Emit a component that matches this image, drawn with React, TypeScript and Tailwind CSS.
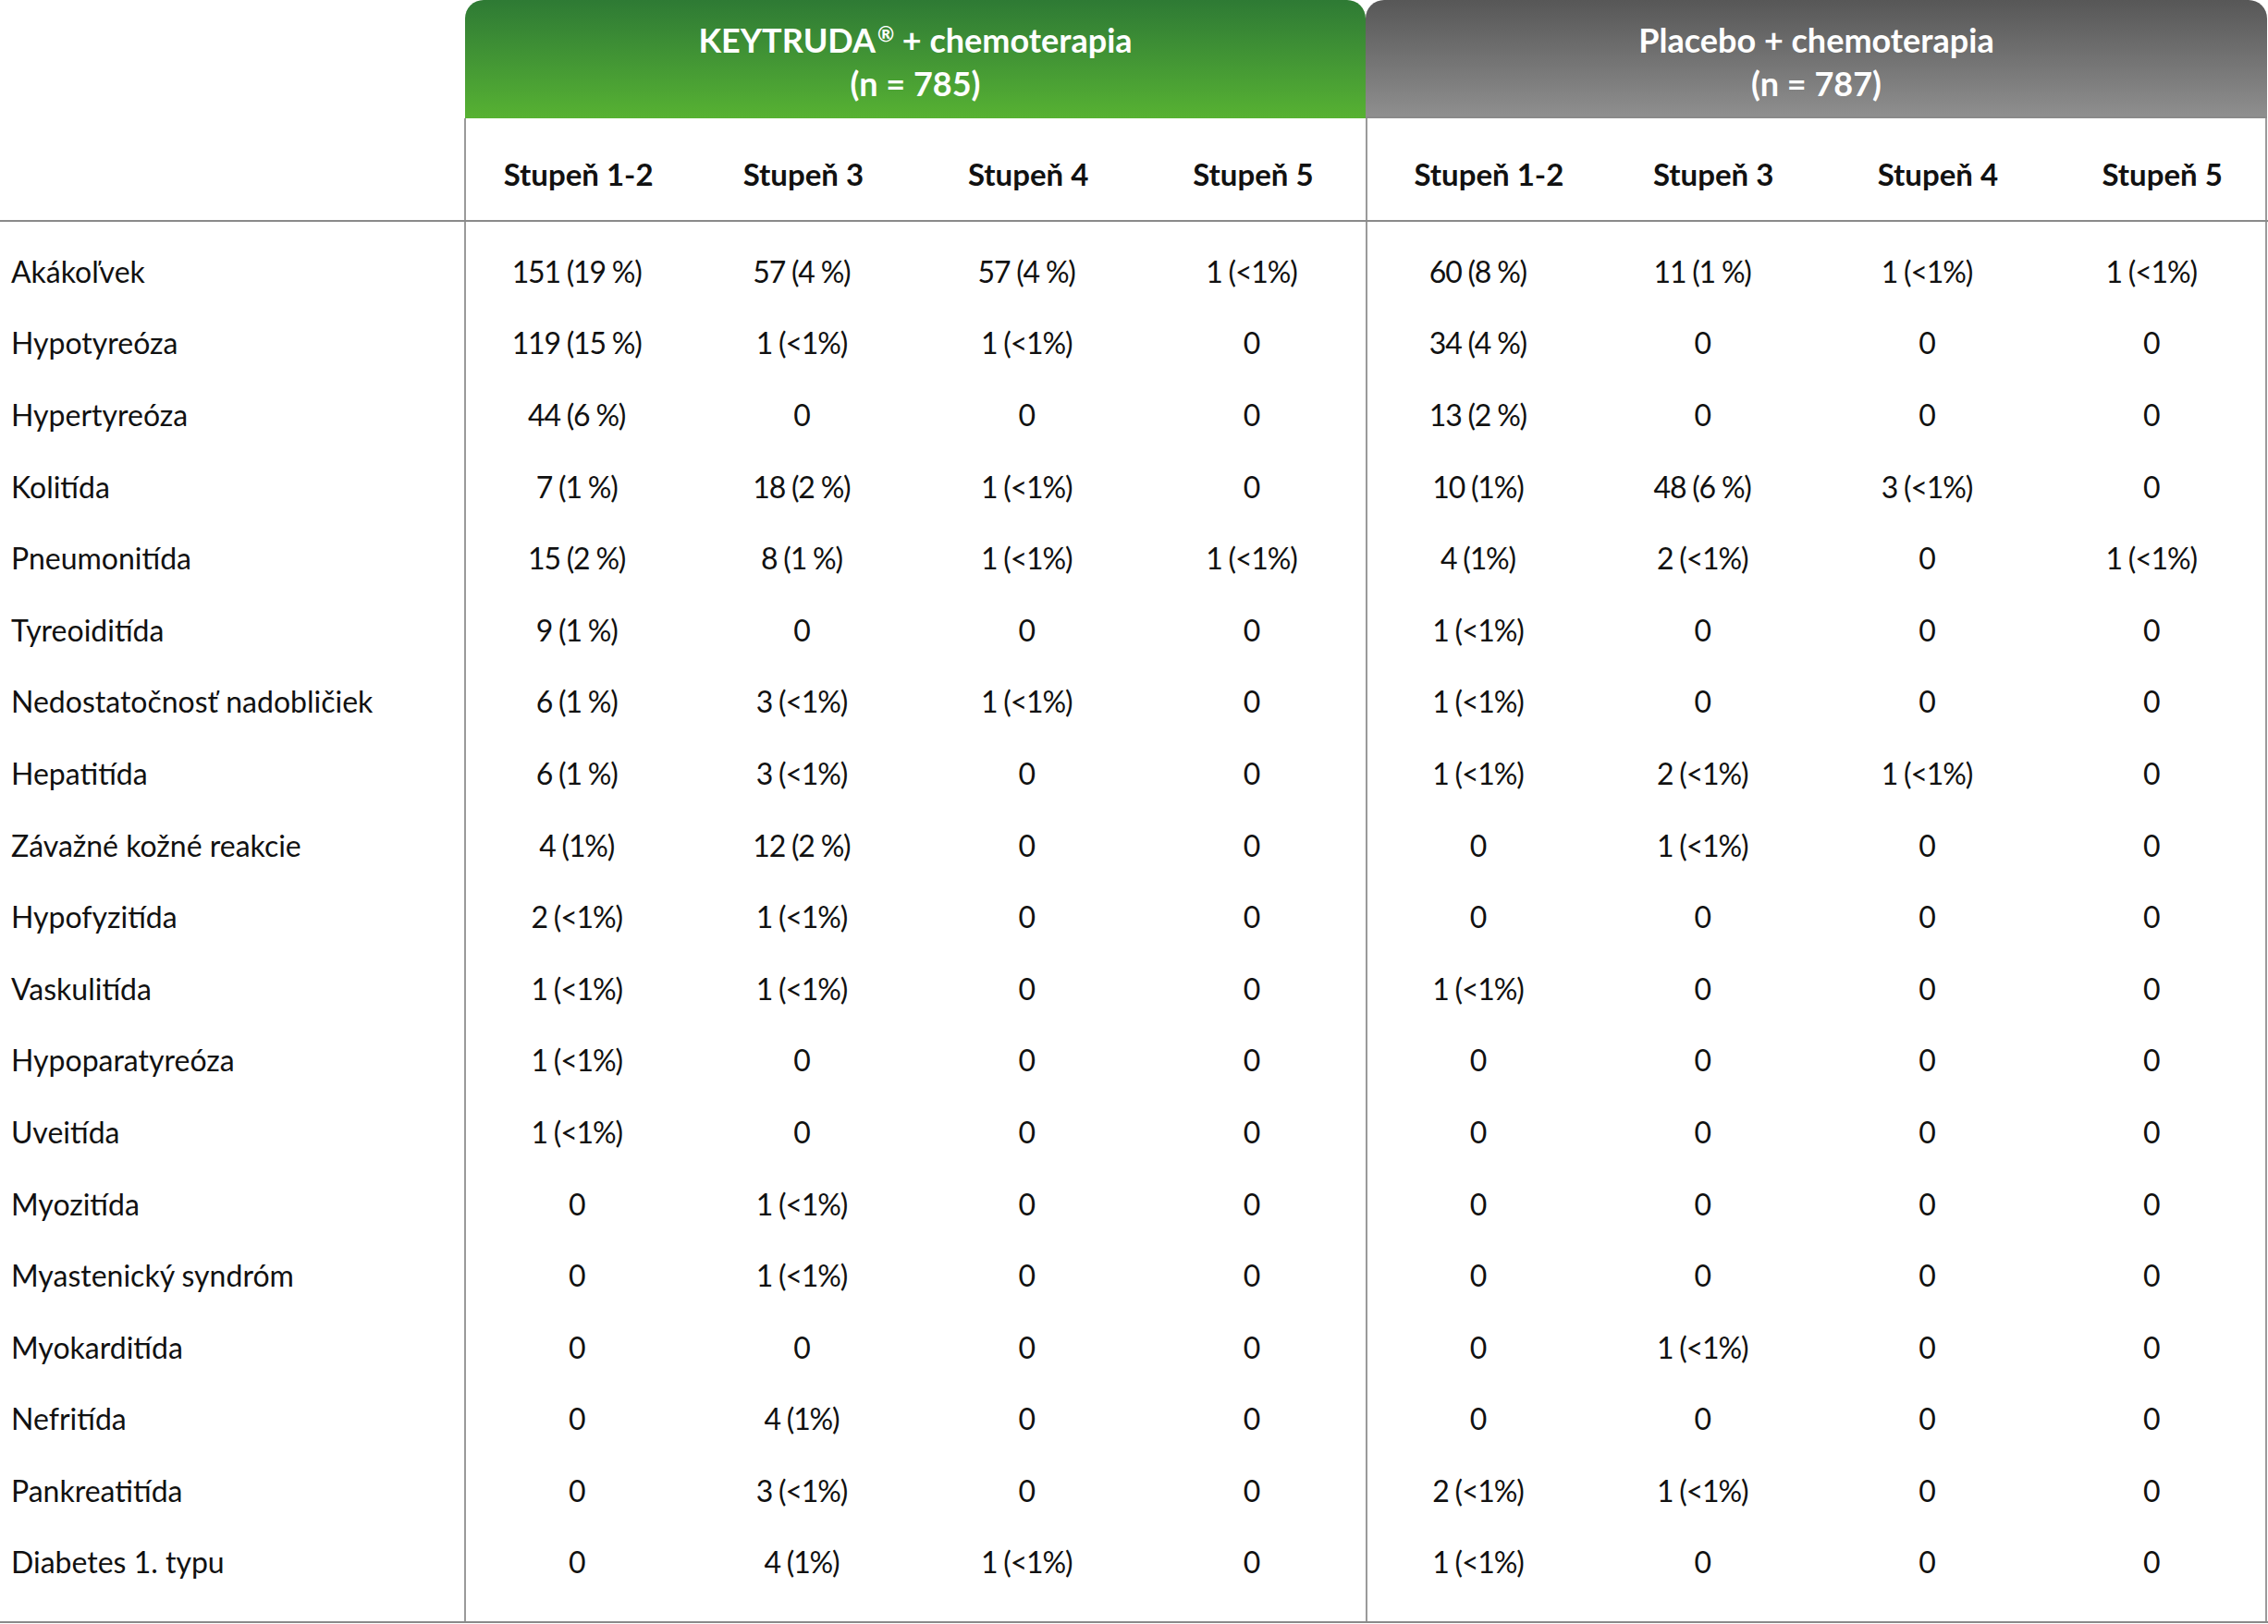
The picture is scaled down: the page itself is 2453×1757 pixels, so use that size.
type Row = { label: string; k: string[]; p: string[] };

const rows: Row[] = [
  { label: "Akákoľvek", k: ["151 (19 %)", "57 (4 %)", "57 (4 %)", "1 (<1%)"], p: ["60 (8 %)", "11 (1 %)", "1 (<1%)", "1 (<1%)"] },
  { label: "Hypotyreóza", k: ["119 (15 %)", "1 (<1%)", "1 (<1%)", "0"], p: ["34 (4 %)", "0", "0", "0"] },
  { label: "Hypertyreóza", k: ["44 (6 %)", "0", "0", "0"], p: ["13 (2 %)", "0", "0", "0"] },
  { label: "Kolitída", k: ["7 (1 %)", "18 (2 %)", "1 (<1%)", "0"], p: ["10 (1%)", "48 (6 %)", "3 (<1%)", "0"] },
  { label: "Pneumonitída", k: ["15 (2 %)", "8 (1 %)", "1 (<1%)", "1 (<1%)"], p: ["4 (1%)", "2 (<1%)", "0", "1 (<1%)"] },
  { label: "Tyreoiditída", k: ["9 (1 %)", "0", "0", "0"], p: ["1 (<1%)", "0", "0", "0"] },
  { label: "Nedostatočnosť nadobličiek", k: ["6 (1 %)", "3 (<1%)", "1 (<1%)", "0"], p: ["1 (<1%)", "0", "0", "0"] },
  { label: "Hepatitída", k: ["6 (1 %)", "3 (<1%)", "0", "0"], p: ["1 (<1%)", "2 (<1%)", "1 (<1%)", "0"] },
  { label: "Závažné kožné reakcie", k: ["4 (1%)", "12 (2 %)", "0", "0"], p: ["0", "1 (<1%)", "0", "0"] },
  { label: "Hypofyzitída", k: ["2 (<1%)", "1 (<1%)", "0", "0"], p: ["0", "0", "0", "0"] },
  { label: "Vaskulitída", k: ["1 (<1%)", "1 (<1%)", "0", "0"], p: ["1 (<1%)", "0", "0", "0"] },
  { label: "Hypoparatyreóza", k: ["1 (<1%)", "0", "0", "0"], p: ["0", "0", "0", "0"] },
  { label: "Uveitída", k: ["1 (<1%)", "0", "0", "0"], p: ["0", "0", "0", "0"] },
  { label: "Myozitída", k: ["0", "1 (<1%)", "0", "0"], p: ["0", "0", "0", "0"] },
  { label: "Myastenický syndróm", k: ["0", "1 (<1%)", "0", "0"], p: ["0", "0", "0", "0"] },
  { label: "Myokarditída", k: ["0", "0", "0", "0"], p: ["0", "1 (<1%)", "0", "0"] },
  { label: "Nefritída", k: ["0", "4 (1%)", "0", "0"], p: ["0", "0", "0", "0"] },
  { label: "Pankreatitída", k: ["0", "3 (<1%)", "0", "0"], p: ["2 (<1%)", "1 (<1%)", "0", "0"] },
  { label: "Diabetes 1. typu", k: ["0", "4 (1%)", "1 (<1%)", "0"], p: ["1 (<1%)", "0", "0", "0"] },
];

const grades = ["Stupeň 1-2", "Stupeň 3", "Stupeň 4", "Stupeň 5"];

const GradeHeaders = ({ shift }: { shift?: boolean }) => (
  <div className="grid grid-cols-4">
    {grades.map((g) => (
      <div
        key={g}
        className={`flex justify-center text-[33px] leading-[40px] font-bold pt-[40px] ${shift ? "pl-[20px]" : ""}`}
      >
        {g}
      </div>
    ))}
  </div>
);

const GroupBody = ({ values, last }: { values: string[][]; last?: boolean }) => (
  <div className={`w-[975px] border-l-2 border-[#9a9a9a] pt-[15px] pb-[25px] ${last ? "border-r-2" : ""}`}>
    {values.map((vals, i) => (
      <div key={i} className="grid grid-cols-4 h-[77.6px]">
        {vals.map((v, j) => (
          <div key={j} className="flex items-center justify-center leading-[38px] tracking-[-1.2px] pr-[4px]">
            {v}
          </div>
        ))}
      </div>
    ))}
  </div>
);

export default function App() {
  return (
    <div className="w-[2453px] bg-white font-['Lato','Noto_Sans',sans-serif] text-[32px] text-[#111]">
      {/* group headers */}
      <div className="flex h-[128px]">
        <div className="w-[503px]" />
        <div className="w-[974px] rounded-t-[20px] bg-gradient-to-b from-[#2e7a34] to-[#57b232] pt-[20px] text-center text-white font-bold text-[36px] leading-[47px]">
          <div>
            KEYTRUDA<span className="relative -top-[12px] text-[22px] leading-none ml-[2px]">®</span> + chemoterapia
          </div>
          <div>(n = 785)</div>
        </div>
        <div className="w-[975px] rounded-t-[20px] bg-gradient-to-b from-[#575757] to-[#8f8f8f] border-b-2 border-[#8a8a8a] pt-[20px] text-center text-white font-bold text-[36px] leading-[47px]">
          <div>Placebo + chemoterapia</div>
          <div>(n = 787)</div>
        </div>
      </div>

      {/* grade headers */}
      <div className="flex h-[112px] border-b-2 border-[#8a8a8a]">
        <div className="w-[502px]" />
        <div className="w-[975px] border-l-2 border-[#9a9a9a]">
          <GradeHeaders />
        </div>
        <div className="w-[975px] border-l-2 border-r-2 border-[#9a9a9a]">
          <GradeHeaders shift />
        </div>
      </div>

      {/* body */}
      <div className="flex border-b-2 border-[#8a8a8a]">
        <div className="w-[502px] pt-[15px] pb-[25px]">
          {rows.map((r) => (
            <div key={r.label} className="flex items-center h-[77.6px] pl-[12px] leading-[38px]">
              {r.label}
            </div>
          ))}
        </div>
        <GroupBody values={rows.map((r) => r.k)} />
        <GroupBody values={rows.map((r) => r.p)} last />
      </div>
    </div>
  );
}
